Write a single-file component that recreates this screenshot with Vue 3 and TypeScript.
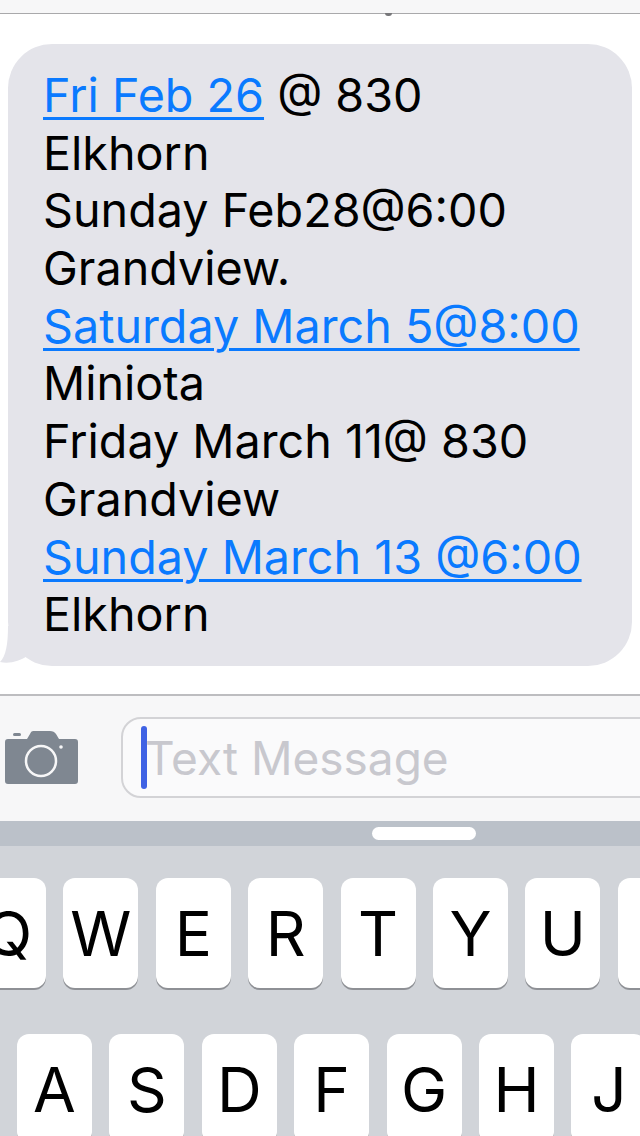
<script setup lang="ts">
type Part = { text: string; link?: boolean }

const lines: Part[][] = [
  [{ text: 'Fri Feb 26', link: true }, { text: ' @ 830' }],
  [{ text: 'Elkhorn' }],
  [{ text: 'Sunday Feb28@6:00' }],
  [{ text: 'Grandview.' }],
  [{ text: 'Saturday March 5@8:00', link: true }],
  [{ text: 'Miniota' }],
  [{ text: 'Friday March 11@ 830' }],
  [{ text: 'Grandview' }],
  [{ text: 'Sunday March 13 @6:00', link: true }],
  [{ text: 'Elkhorn' }],
]

const topRow = ['Q', 'W', 'E', 'R', 'T', 'Y', 'U', 'I']
const homeRow = ['A', 'S', 'D', 'F', 'G', 'H', 'J']
</script>

<template>
  <div class="phone">
    <div class="navbar"><span class="nub"></span></div>

    <div class="thread">
      <div class="bubble">
        <svg class="tail" width="36" height="40" viewBox="0 0 36 40">
          <path d="M8 0 C8 18 6 30 0 36 C10 38 20 35 27 30 L36 24 L36 0 Z" fill="#e4e4ea" />
        </svg>
        <div v-for="(line, i) in lines" :key="i" class="line">
          <template v-for="(part, j) in line" :key="j">
            <a v-if="part.link" class="link">{{ part.text }}</a>
            <span v-else>{{ part.text }}</span>
          </template>
        </div>
      </div>
    </div>

    <div class="composer">
      <svg class="camera" width="74" height="56" viewBox="0 0 74 56">
        <path
          d="M28 1 H45 Q49 1 51 4 L54 9 H70 Q73 9 73 12 V51 Q73 54 70 54 H3 Q0 54 0 51 V12 Q0 9 3 9 H22 L25 4 Q26 1 28 1 Z"
          fill="#7f8791"
        />
        <rect x="8" y="3" width="8" height="3" rx="1.5" fill="#7f8791" />
        <circle cx="36" cy="31" r="15" fill="none" stroke="#f7f7f8" stroke-width="2.5" />
        <circle cx="56" cy="17" r="1.8" fill="#f7f7f8" />
      </svg>
      <div class="field">
        <span class="caret"></span>
        <span class="placeholder">Text Message</span>
      </div>
    </div>

    <div class="handle-bar"><span class="handle"></span></div>

    <div class="keyboard">
      <div class="row row-top">
        <div v-for="k in topRow" :key="k" class="key">{{ k }}</div>
      </div>
      <div class="row row-home">
        <div v-for="k in homeRow" :key="k" class="key">{{ k }}</div>
      </div>
    </div>
  </div>
</template>

<style scoped>
.phone {
  width: 640px;
  height: 1136px;
  overflow: hidden;
  display: flex;
  flex-direction: column;
  background: #fff;
  font-family: Inter, "Liberation Sans", sans-serif;
  color: #000;
}
.navbar {
  height: 13px;
  flex: none;
  position: relative;
  background: #f7f7f8;
  border-bottom: 1px solid #a9a9ab;
}
.nub {
  position: absolute;
  left: 385px;
  top: 13px;
  width: 7px;
  height: 3px;
  border-radius: 0 0 3px 3px;
  background: #77777a;
}
.thread {
  height: 680px;
  flex: none;
  box-sizing: border-box;
  padding: 30px 8px 0;
}
.bubble {
  position: relative;
  height: 622px;
  box-sizing: border-box;
  padding: 23px 35px 0;
  border-radius: 44px;
  background: #e4e4ea;
}
.tail {
  position: absolute;
  left: -8px;
  bottom: 0;
}
.line {
  position: relative;
  height: 57.7px;
  line-height: 57.7px;
  font-size: 46.7px;
  white-space: pre;
}
.link {
  color: #0a7aff;
  text-decoration: underline;
  text-decoration-thickness: 3px;
  text-underline-offset: 5px;
}
.composer {
  height: 127px;
  flex: none;
  box-sizing: border-box;
  display: flex;
  align-items: flex-start;
  background: #f7f7f8;
  border-top: 2px solid #bdbdc0;
}
.camera {
  flex: none;
  margin: 34px 0 0 5px;
}
.field {
  flex: none;
  width: 560px;
  height: 81px;
  box-sizing: border-box;
  margin: 21px 0 0 42px;
  padding-left: 18px;
  display: flex;
  align-items: center;
  background: #fafafb;
  border: 2px solid #d3d3d6;
  border-radius: 20px;
}
.caret {
  flex: none;
  width: 6px;
  height: 63px;
  border-radius: 3px;
  background: #3f62e4;
}
.placeholder {
  margin-left: -2px;
  font-size: 46px;
  color: #c8c8ce;
  white-space: nowrap;
}
.handle-bar {
  height: 25px;
  flex: none;
  background: #bbc1c9;
  padding-left: 372px;
}
.handle {
  display: block;
  width: 104px;
  height: 13px;
  margin-top: 6px;
  border-radius: 7px;
  background: #fff;
}
.keyboard {
  flex: 1;
  display: flex;
  flex-direction: column;
  gap: 46px;
  padding-top: 32px;
  background: #d1d4d9;
}
.row {
  display: flex;
  gap: 17.4px;
}
.row-top {
  margin-left: -29px;
}
.row-home {
  margin-left: 17px;
}
.key {
  flex: none;
  width: 75px;
  height: 110px;
  display: flex;
  align-items: center;
  justify-content: center;
  border-radius: 12px;
  background: #fff;
  box-shadow: 0 2px 0 #8e9095;
  font-size: 62px;
}
</style>
